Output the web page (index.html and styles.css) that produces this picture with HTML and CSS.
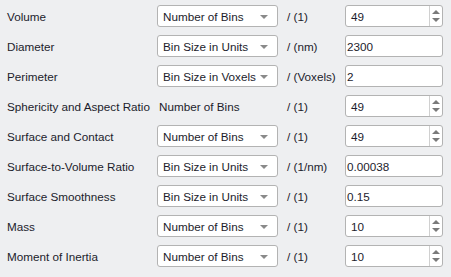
FILE: index.html
```html
<!DOCTYPE html>
<html lang="en">
<head>
    <meta charset="UTF-8">
    <title>Histogram Settings</title>
    <link rel="stylesheet" href="styles.css">
</head>
<body>
    <div class="settings-grid">
        <!-- Volume -->
        <div class="label">Volume</div>
        <div class="combo">Number of Bins<span class="combo-arrow"></span></div>
        <div class="unit">/ (1)</div>
        <div class="spin"><span class="value">49</span><span class="spin-buttons"></span></div>

        <!-- Diameter -->
        <div class="label">Diameter</div>
        <div class="combo">Bin Size in Units<span class="combo-arrow"></span></div>
        <div class="unit">/ (nm)</div>
        <div class="edit">2300</div>

        <!-- Perimeter -->
        <div class="label">Perimeter</div>
        <div class="combo">Bin Size in Voxels<span class="combo-arrow"></span></div>
        <div class="unit">/ (Voxels)</div>
        <div class="edit">2</div>

        <!-- Sphericity -->
        <div class="label">Sphericity and Aspect Ratio</div>
        <div class="plain">Number of Bins</div>
        <div class="unit">/ (1)</div>
        <div class="spin"><span class="value">49</span><span class="spin-buttons"></span></div>

        <!-- Surface and Contact -->
        <div class="label">Surface and Contact</div>
        <div class="combo">Number of Bins<span class="combo-arrow"></span></div>
        <div class="unit">/ (1)</div>
        <div class="spin"><span class="value">49</span><span class="spin-buttons"></span></div>

        <!-- Surface-to-Volume -->
        <div class="label">Surface-to-Volume Ratio</div>
        <div class="combo">Bin Size in Units<span class="combo-arrow"></span></div>
        <div class="unit">/ (1/nm)</div>
        <div class="edit">0.00038</div>

        <!-- Smoothness -->
        <div class="label">Surface Smoothness</div>
        <div class="combo">Bin Size in Units<span class="combo-arrow"></span></div>
        <div class="unit">/ (1)</div>
        <div class="edit">0.15</div>

        <!-- Mass -->
        <div class="label">Mass</div>
        <div class="combo">Number of Bins<span class="combo-arrow"></span></div>
        <div class="unit">/ (1)</div>
        <div class="spin"><span class="value">10</span><span class="spin-buttons"></span></div>

        <!-- Moment of Inertia -->
        <div class="label">Moment of Inertia</div>
        <div class="combo">Number of Bins<span class="combo-arrow"></span></div>
        <div class="unit">/ (1)</div>
        <div class="spin"><span class="value">10</span><span class="spin-buttons"></span></div>
    </div>
</body>
</html>
```
FILE: styles.css
```css
/* General Reset */
body, html {
    margin: 0;
    padding: 0;
    width: 100%;
    height: 100%;
    overflow: hidden;
    background: #eeeff1;
    font-family: "Liberation Sans", Arial, sans-serif;
    font-size: 11.7px;
    color: #1c1c2c;
}

/* Form grid */
.settings-grid {
    display: grid;
    grid-template-columns: 144px 121px 55px 98px;
    grid-auto-rows: 22px;
    column-gap: 6px;
    row-gap: 8px;
    padding: 5px 0 0 7px;
    align-items: center;
}

.label,
.plain,
.unit {
    white-space: nowrap;
}

.plain {
    padding-left: 2px;
}

.unit {
    padding-left: 3px;
}

/* Combo box */
.combo,
.spin,
.edit {
    height: 22px;
    box-sizing: border-box;
    background: #fff;
    border: 1px solid #b3b3b3;
    border-radius: 3px;
    display: flex;
    align-items: center;
    white-space: nowrap;
}

.combo {
    position: relative;
    padding-left: 5px;
}

.combo-arrow {
    position: absolute;
    right: 9px;
    top: 9px;
    width: 0;
    height: 0;
    border-left: 4px solid transparent;
    border-right: 4px solid transparent;
    border-top: 4px solid #8a8a8a;
}

/* Line edit */
.edit {
    padding-left: 1px;
}

/* Spin box */
.spin {
    position: relative;
    padding-left: 5px;
}

.spin-buttons {
    position: absolute;
    top: 0;
    right: 0;
    bottom: 0;
    width: 12px;
    border-left: 1px solid #d0d0d0;
}

.spin-buttons::before,
.spin-buttons::after {
    content: "";
    position: absolute;
    left: 2px;
    width: 0;
    height: 0;
    border-left: 4px solid transparent;
    border-right: 4px solid transparent;
}

.spin-buttons::before {
    top: 4px;
    border-bottom: 4px solid #7a7a7a;
}

.spin-buttons::after {
    bottom: 4px;
    border-top: 4px solid #7a7a7a;
}
```
